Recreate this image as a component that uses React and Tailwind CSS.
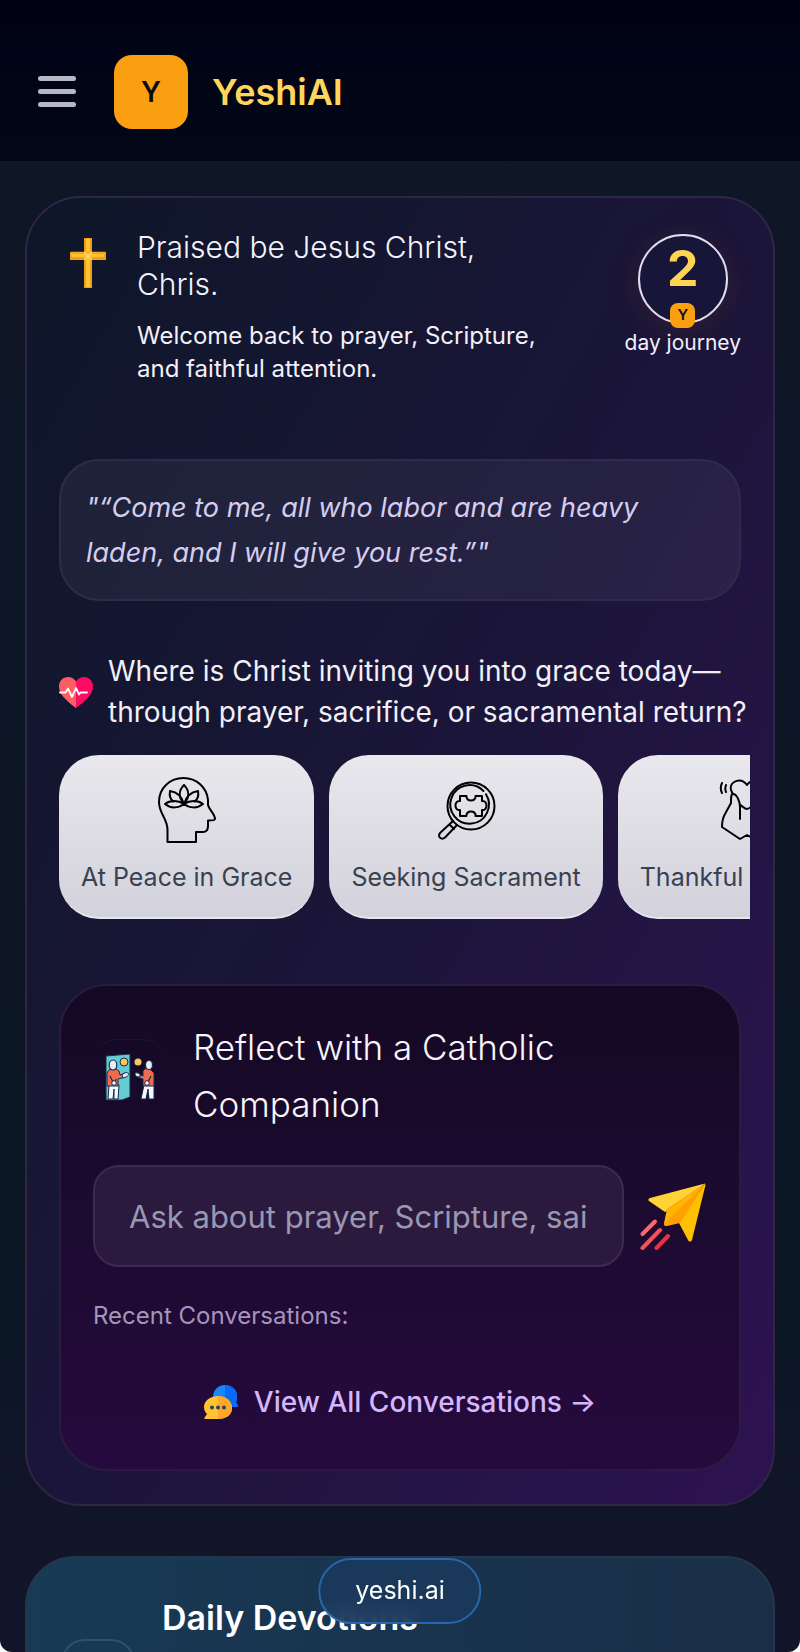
import { useState } from "react";

const MOODS = [
  { id: "peace", label: "At Peace in Grace", Icon: PeaceIcon },
  { id: "seeking", label: "Seeking Sacrament", Icon: SeekingIcon },
  { id: "thankful", label: "Thankful in Prayer", Icon: ThankfulIcon },
];

function CrossIcon() {
  return (
    <svg viewBox="0 0 38 52" className="w-[38px] h-[52px]" aria-hidden="true">
      <path d="M15 1h8v14h14v8H23v28h-8V23H1v-8h14z" fill="#f59a1b" />
      <path d="M17 2h4v15h15l-2 3H21v30h-4V20H3l-1-3h15z" fill="#ffc531" />
      <path d="M2 15.500h34" stroke="#ffab22" strokeWidth="1.500" />
      <path d="m15 15 8 8m0-8-8 8" stroke="#ffe070" strokeWidth="1.200" />
    </svg>
  );
}

function HeartIcon() {
  return (
    <svg viewBox="0 0 34 31" className="w-[34px] h-[31px] shrink-0" aria-hidden="true">
      <path d="M17 31C8 24 0 18 0 9.500 0 4 4 0 9 0c3.500 0 6.500 1.800 8 4.500z" fill="#ff5d64" />
      <path d="M17 31c9-7 17-13 17-21.500C34 4 30 0 25 0c-3.500 0-6.500 1.800-8 4.500z" fill="#ff0b62" />
      <path
        d="M1 15.500h5.500l2.500-4 4 8.500 4-9 3 6.500 1.500-2H28"
        fill="none"
        stroke="#fff"
        strokeWidth="1.800"
        strokeLinejoin="round"
        strokeLinecap="round"
      />
    </svg>
  );
}

function PeaceIcon() {
  return (
    <svg viewBox="0 0 64 68" className="w-16 h-[68px]" fill="none" stroke="#000" strokeWidth="2" strokeLinejoin="round" aria-hidden="true">
      <path d="M12.500 66V54C12.500 42 4 38 4 26 4 12 15 2 28.500 2S52 12 53 24v5c1 5 7 9 7 14 0 1-2 1.500-7 1.500V50c0 4-2 6-5 6h-7v10z" />
      <path d="M29 28c-6-7-5-14 0-19 5 5 6 12 0 19z" />
      <path d="M29 28c-2-7-7-12-14-13-1 5 1 9 4 11" />
      <path d="M29 28c2-7 7-12 14-13 1 5-1 9-4 11" />
      <path d="M29 28c-6-4-14-4-19 0 6 5 14 4 19 0zM29 28c6-4 14-4 19 0-6 5-14 4-19 0z" />
    </svg>
  );
}

function SeekingIcon() {
  return (
    <svg viewBox="0 0 64 68" className="w-16 h-[68px]" fill="none" stroke="#000" strokeWidth="2" strokeLinejoin="round" strokeLinecap="round" aria-hidden="true">
      <circle cx="37" cy="30" r="23.500" />
      <path d="M49.500 15A19.300 19.300 0 1 0 52 18.200" />
      <path d="M26 20h6.500c-1 6 10 6 9 0H48v5c6-1 6 10 0 9v6h-6.500c1-6-10-6-9 0H26v-6c-6 1-6-10 0-9z" />
      <path d="M19 45 6.500 56.500c-4 4 1 8 4.500 5L23 49M16 49l4 4" />
    </svg>
  );
}

function ThankfulIcon() {
  return (
    <svg viewBox="0 0 64 68" className="w-16 h-[68px]" fill="none" stroke="#000" strokeWidth="2" strokeLinejoin="round" strokeLinecap="round" aria-hidden="true">
      <path d="M32 9c-6-8-18-4-16 5 1 2 1 3 2 4M32 9c6-8 18-4 16 5-1 2-1 3-2 4" />
      <path d="M25 29c2 1 5 4 7 4s5-3 7-4" />
      <path d="M25 43V31c0-5-3-13-7-13-2 0-2 3-2 9l-6 11c-3 5-3 9-3 13l18 12 7-4 7 4 18-12c0-4 0-8-3-13l-6-11c0-6 0-9-2-9-4 0-7 8-7 13v12" />
      <path d="M7 7c-2 4-1 8 0 10M11 9c-1 3-1 5 0 7M57 7c2 4 1 8 0 10M53 9c1 3 1 5 0 7" />
    </svg>
  );
}

function CompanionIcon() {
  return (
    <svg viewBox="0 0 50 48" className="w-[50px] h-12" aria-hidden="true">
      <path d="M1 3 25 1v43l-8 3H1z" fill="#65cbd3" stroke="#152b4a" strokeWidth="1" />
      <path d="M4 32h10l-1 14H9V36L8 46H3zM39 32h10v14h-5l-1-10-2 10h-5z" fill="#f4f8ff" stroke="#152b4a" strokeWidth="1" />
      <path d="M4 17c3-2 7-2 10 1l1 4 5-2 1 4-8 2v7H2V20zM46 17c-3-2-6-2-8 1v5l-6-2v3l6 2v7h11V20z" fill="#ef6a4f" stroke="#152b4a" strokeWidth="1" />
      <circle cx="19" cy="9" r="4" fill="#f8c65b" stroke="#152b4a" />
      <circle cx="33" cy="9" r="3.500" fill="#f8c65b" />
      <path d="M17 22c2-2 4-3 6-2s0 4-5 5zM35 24c-3 0-5-1-5-3s3-1 5 0z" fill="#e8edf8" stroke="#152b4a" />
      <ellipse cx="8" cy="12" rx="3.800" ry="5" fill="#e8edf8" stroke="#152b4a" strokeWidth="1.200" />
      <ellipse cx="44" cy="12" rx="3.500" ry="4.500" fill="#e8edf8" stroke="#152b4a" strokeWidth="1.200" />
      <path d="m5 23 4 8 2-5M46 23l-4 8" fill="none" stroke="#152b4a" strokeWidth="1.200" />
      <circle cx="9" cy="30" r="2.300" fill="#f4f8ff" stroke="#152b4a" />
      <circle cx="42" cy="30" r="2.300" fill="#f4f8ff" stroke="#152b4a" />
    </svg>
  );
}

function SendIcon() {
  return (
    <svg viewBox="0 0 68 68" className="w-[68px] h-[68px]" aria-hidden="true">
      <g strokeWidth="4" strokeLinecap="round">
        <path d="M3.500 52 16 39.500" stroke="#ff6670" />
        <path d="M3.500 66 21 48" stroke="#f7505d" />
        <path d="M17.500 66 29 54" stroke="#e93240" />
      </g>
      <path d="M66 1.500 11 16c-2 1-2 2-1 3l16 11z" fill="#ffd335" />
      <path d="M66 1.500 40 41l9 17c1 2 3 2 4 0L66.500 3z" fill="#ffc000" />
      <path d="M66 1.500 28 27l-3 15c0 2 1 2 3 2l13-3z" fill="#ff9f00" />
      <path d="M66 1.500 36 23l-8 5-3 14z" fill="#ffb600" />
    </svg>
  );
}

function ChatIcon() {
  return (
    <svg viewBox="0 0 34 35" className="w-[34px] h-[35px]" aria-hidden="true">
      <path d="M21 0c7 0 12 5 12 11 0 3 0 4-1 6l2 4c0 1-1 1-2 1H20L9 12C9 5 14 0 21 0z" fill="#1687ff" />
      <path d="M21 0c7 0 12 5 12 11 0 3 0 4-1 6l2 4c0 1-1 1-2 1H21z" fill="#0869fa" />
      <path d="M14 11c8 0 14 5 14 12s-6 11-14 11H1c-1 0-1-1 0-2l2-3c-2-2-3-4-3-7 0-6 6-11 14-11z" fill="#ffc42f" />
      <path d="M14 11c8 0 14 5 14 12s-6 11-14 11z" fill="#ffa72b" />
      <g fill="#24445c">
        <circle cx="8" cy="22.500" r="2" />
        <circle cx="14" cy="22.500" r="2" />
        <circle cx="20" cy="22.500" r="2" />
      </g>
    </svg>
  );
}

function Header() {
  return (
    <header className="flex items-center shrink-0 h-[161px] pt-[22px] px-[38px] bg-linear-to-b from-[#000214] to-[#020817]">
      <button aria-label="Open menu" className="flex flex-col gap-2 w-[38px]">
        <span className="h-[5px] w-full rounded-full bg-[#b7b6c3]" />
        <span className="h-[5px] w-full rounded-full bg-[#b7b6c3]" />
        <span className="h-[5px] w-full rounded-full bg-[#b7b6c3]" />
      </button>
      <span className="flex items-center justify-center w-[74px] h-[74px] ml-[38px] rounded-[18px] bg-[#f99f11] text-[#0b0b12] text-[28px] font-semibold">
        Y
      </span>
      <span className="ml-6 text-[36px] font-semibold text-[#ffd65a]">YeshiAI</span>
    </header>
  );
}

function Greeting() {
  return (
    <section className="flex items-start">
      <div className="w-[78px] shrink-0 pl-[10px] pt-2">
        <CrossIcon />
      </div>
      <div className="flex-1 min-w-0">
        <h1 className="max-w-[400px] text-[30px] leading-[37px] font-light text-[#f5f3fa]">
          Praised be Jesus Christ, Chris.
        </h1>
        <p className="mt-4 max-w-[440px] text-[24px] leading-[33px] text-[#f2f0f8]">
          Welcome back to prayer, Scripture, and faithful attention.
        </p>
      </div>
      <div className="flex flex-col items-center shrink-0 pt-[5px]">
        <div className="relative flex justify-center w-[90px] h-[90px] rounded-full border-2 border-[#e2def0] bg-[#171638] shadow-[0_4px_28px_rgba(180,90,30,0.16)]">
          <span className="pt-[7px] text-[50px] leading-[50px] font-bold text-[#ffd453]">2</span>
          <span className="absolute -bottom-1.5 flex items-center justify-center w-[25px] h-[25px] rounded-lg bg-[#f99f11] text-[15px] font-semibold text-[#101018]">
            Y
          </span>
        </div>
        <span className="mt-[3px] text-[21px] leading-[32px] text-[#f2f0f8]">day journey</span>
      </div>
    </section>
  );
}

function MoodPicker() {
  const [mood, setMood] = useState(null);

  return (
    <section className="mt-[50px] -mr-[9px]">
      <div className="flex items-center gap-[15px]">
        <HeartIcon />
        <h2 className="text-[28px] leading-[41px] text-[#f1eff8]">
          Where is Christ inviting you into grace today—through prayer, sacrifice, or sacramental return?
        </h2>
      </div>
      <div className="flex gap-[15px] mt-[22px] overflow-x-auto [scrollbar-width:none]">
        {MOODS.map(({ id, label, Icon }) => (
          <button
            key={id}
            onClick={() => setMood(id)}
            aria-pressed={mood === id}
            className="flex flex-col items-center shrink-0 h-[164px] px-[22px] pt-[21px] rounded-[40px] border-b-2 border-[#e6e4ec] bg-linear-to-b from-[#e9e8ed] to-[#d3d2dc] text-[#374151]"
          >
            <Icon />
            <span className="mt-4 text-[25px] leading-[34px] whitespace-nowrap">{label}</span>
          </button>
        ))}
      </div>
    </section>
  );
}

function Companion() {
  const [question, setQuestion] = useState("");

  function handleSubmit(e) {
    e.preventDefault();
    setQuestion("");
  }

  return (
    <section className="mt-[65px] px-8 pt-[33px] pb-[44px] rounded-[48px] border-2 border-[#2c1b40] bg-linear-to-b from-[#140924] via-[#1d0a31] to-[#260a3e]">
      <div className="flex items-center gap-[26px]">
        <div className="flex items-center justify-center w-[74px] h-[74px] shrink-0 rounded-3xl border-t border-[#21142f]">
          <CompanionIcon />
        </div>
        <h2 className="text-[35px] leading-[57px] font-light text-[#f8f5fc]">
          Reflect with a Catholic Companion
        </h2>
      </div>
      <form onSubmit={handleSubmit} className="flex items-center gap-[15px] mt-[32px]">
        <input
          type="text"
          aria-label="Ask about prayer"
          value={question}
          onChange={(e) => setQuestion(e.target.value)}
          placeholder="Ask about prayer, Scripture, saints"
          className="flex-1 min-w-0 h-[102px] px-[34px] rounded-[26px] border-2 border-[#3c2a50] bg-[#2b1a3e] text-[31px] text-white placeholder:text-[#9a97b3] outline-none"
        />
        <button type="submit" aria-label="Send">
          <SendIcon />
        </button>
      </form>
      <p className="mt-[32px] text-[24px] leading-[34px] text-[#a595bd]">Recent Conversations:</p>
      <a href="#conversations" className="flex items-center justify-center gap-4 mt-[46px] text-[28px] leading-[46px] font-medium text-[#d5b6fb]">
        <ChatIcon />
        View All Conversations →
      </a>
    </section>
  );
}

export default function App() {
  return (
    <div className="bg-white">
      <div className="relative flex flex-col h-screen overflow-hidden rounded-b-xl bg-linear-to-b from-[#0f1727] via-[#0b1625] via-80% to-[#14152b] font-['Inter',sans-serif]">
        <Header />
        <main className="flex-1 min-h-0 px-[25px] pt-[35px] overflow-y-auto [scrollbar-width:none]">
          <div className="px-8 pt-[31px] pb-[33px] rounded-[56px] border-2 border-[#302544] bg-linear-to-br from-[#0d1729] via-[#1b1539] to-[#2e1252]">
            <Greeting />
            <blockquote className="mt-[74px] px-[25px] py-[24px] rounded-[40px] border-2 border-[#302b4a] bg-white/5 text-[27px] leading-[45px] italic text-[#d5cdf0]">
              "“Come to me, all who labor and are heavy laden, and I will give you rest.”"
            </blockquote>
            <MoodPicker />
            <Companion />
          </div>

          <section className="flex gap-[27px] mt-[50px] px-[34px] pt-[36px] pb-8 rounded-[50px] border-2 border-[#26354a] bg-linear-to-r from-[#173a55] to-[#1a2e47]">
            <div className="w-[74px] h-[75px] mt-[45px] shrink-0 rounded-3xl border-2 border-[#2e5369]" />
            <h2 className="text-[34px] leading-[48px] font-semibold text-white">Daily Devotions</h2>
          </section>
        </main>

        <div className="absolute bottom-7 left-1/2 -translate-x-1/2 flex items-center justify-center h-[66px] px-[35px] rounded-full border-2 border-[#2866ae] bg-[#1b385c]/90 backdrop-blur-sm text-[25px] text-white">
          yeshi.ai
        </div>
      </div>
    </div>
  );
}
